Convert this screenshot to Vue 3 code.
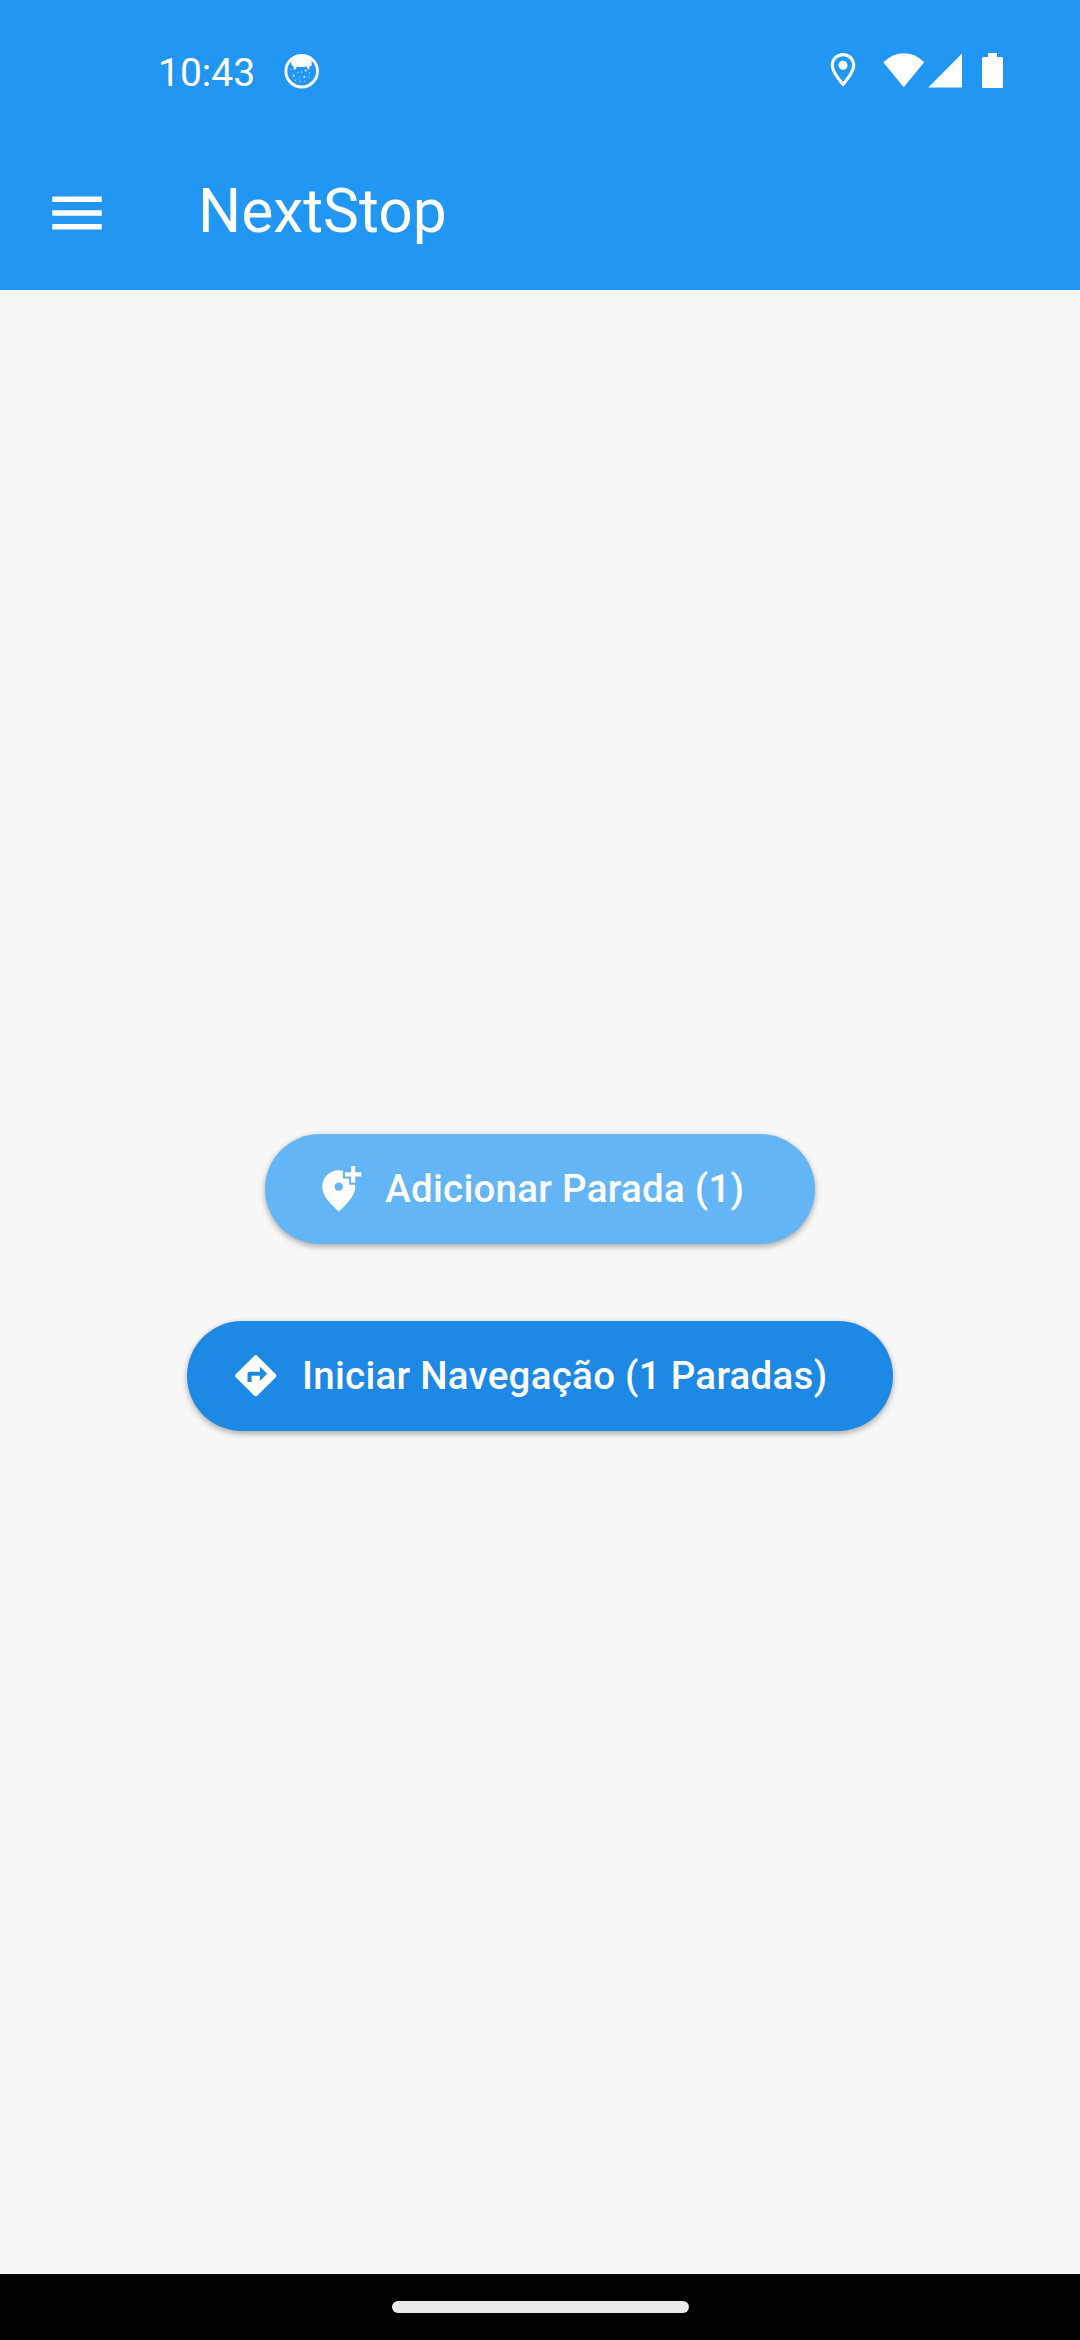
<script setup>
import { ref, computed } from 'vue'

const time = '10:43'
const title = 'NextStop'
const stops = ref(1)
const addLabel = computed(() => `Adicionar Parada (${stops.value})`)
const startLabel = computed(() => `Iniciar Navegação (${stops.value} Paradas)`)
</script>

<template>
  <div class="screen">
    <header class="header">
      <div class="status-bar">
        <span class="clock">{{ time }}</span>
        <svg class="face" viewBox="0 0 36 36" width="36" height="36">
          <circle cx="17.700" cy="18.200" r="15.800" fill="none" stroke="#fff" stroke-width="2.900" />
          <path fill="#fff" d="M8 7Q17.700-1 27.500 7L27.800 12 26.500 13.500 25.300 13 25.500 16 24 16.500 22.800 13.500Q17.700 14.500 12.800 13.500L11.500 16.500 9.700 16.500 9.500 13.500 8 12.500 6.800 10Z" />
          <g fill="#fff" fill-opacity=".75">
            <circle cx="21.700" cy="17.500" r="1.100" />
            <circle cx="9.700" cy="22.700" r="1.100" />
            <circle cx="20.300" cy="23.800" r="1.100" />
            <circle cx="14" cy="19.700" r=".7" />
            <circle cx="17.500" cy="19" r=".7" />
            <circle cx="25.500" cy="20" r=".7" />
            <circle cx="7" cy="16.500" r=".6" />
            <circle cx="25" cy="24" r=".6" />
            <circle cx="15.500" cy="25" r=".6" />
            <circle cx="11.500" cy="27.300" r=".7" />
            <circle cx="16.300" cy="28.500" r=".7" />
            <circle cx="20.500" cy="28" r=".6" />
          </g>
        </svg>
        <svg class="pin" viewBox="0 0 26 36" width="26" height="36">
          <path fill="none" stroke="#fff" stroke-width="3.200" stroke-linejoin="round" d="M13 2.600C6.900 2.600 2.300 7.300 2.300 13.300 2.300 19 7 25.500 13 32.500 19 25.500 23.700 19 23.700 13.300 23.700 7.300 19.100 2.600 13 2.600Z" />
          <circle cx="13" cy="13.300" r="4.500" fill="#fff" />
        </svg>
        <svg class="wifi" viewBox="0 0 42 36" width="42" height="36">
          <path fill="#fff" d="M.3 10.300Q9.500 1.300 21 1.300T41.200 10.300L20.700 35.300Z" />
        </svg>
        <svg class="signal" viewBox="0 0 35 36" width="35" height="36">
          <path fill="#fff" d="M.3 35.400 34 1.500V35.400Z" />
        </svg>
        <svg class="battery" viewBox="0 0 21 36" width="21" height="36">
          <path fill="#fff" d="M6 1h9v4h4.500Q21 5 21 6.500v28Q21 36 19.500 36h-18Q0 36 0 34.500v-28Q0 5 1.500 5H6Z" />
        </svg>
      </div>
      <div class="app-bar">
        <svg class="menu" viewBox="0 0 24 24" width="66" height="66">
          <path fill="#fff" d="M3 18h18v-2H3v2zm0-5h18v-2H3v2zm0-7v2h18V6H3z" />
        </svg>
        <h1 class="title">{{ title }}</h1>
      </div>
    </header>

    <main class="body">
      <button class="btn add">
        <svg class="icon" viewBox="0 0 24 24">
          <path fill="#fff" d="M20 1v3h3v2h-3v3h-2V6h-3V4h3V1h2zM12 13c1.100 0 2-.9 2-2s-.9-2-2-2-2 .9-2 2 .9 2 2 2zM14 3.250V7h3v3h2.920c.05.390.08.790.08 1.200 0 3.320-2.670 7.250-8 11.800-5.330-4.550-8-8.480-8-11.800C4 6.220 7.800 3 12 3c.68 0 1.350.08 2 .25z" />
        </svg>
        <span>{{ addLabel }}</span>
      </button>
      <button class="btn start">
        <svg class="icon" viewBox="0 0 24 24">
          <path fill="#fff" d="M21.710 11.290l-9-9c-.39-.39-1.020-.39-1.410 0l-9 9c-.39.39-.39 1.020 0 1.410l9 9c.39.39 1.020.39 1.410 0l9-9c.39-.38.39-1.010 0-1.410zM14 14.500V12h-4v3H8v-4c0-.55.450-1 1-1h5V7.500l3.500 3.500-3.500 3.500z" />
        </svg>
        <span>{{ startLabel }}</span>
      </button>
    </main>

    <footer class="nav-bar">
      <div class="handle"></div>
    </footer>
  </div>
</template>

<style scoped>
.screen {
  display: flex;
  flex-direction: column;
  width: 1080px;
  height: 2340px;
  background: #f8f8f8;
  font-family: Roboto, sans-serif;
  color: #fff;
  overflow: hidden;
}
.header {
  height: 290px;
  background: #2196f3;
}
.status-bar {
  display: flex;
  align-items: flex-start;
  box-sizing: border-box;
  height: 136px;
  padding: 52px 77px 0 158px;
}
.clock {
  width: 126px;
  margin-top: 1px;
  font-size: 39px;
  line-height: 40px;
}
.face {
  margin-top: 1px;
}
.pin {
  margin-left: auto;
}
.wifi {
  margin-left: 27px;
}
.signal {
  margin-left: 3px;
}
.battery {
  margin-left: 19px;
}
.app-bar {
  display: flex;
  align-items: center;
  height: 154px;
  padding-left: 44px;
}
.title {
  margin: 0 0 2px 88px;
  font-size: 60.5px;
  font-weight: 400;
  line-height: 76px;
}
.body {
  flex: 1;
  display: flex;
  flex-direction: column;
  align-items: center;
  justify-content: center;
  gap: 77px;
  padding-top: 1px;
}
.btn {
  display: flex;
  align-items: center;
  justify-content: center;
  gap: 22px;
  box-sizing: border-box;
  height: 110px;
  padding: 0 66px 1px 44px;
  border: 0;
  border-radius: 55px;
  box-shadow: 0 3px 6px rgba(0, 0, 0, 0.28), 0 0 5px rgba(0, 0, 0, 0.08);
  color: #fff;
  font-family: inherit;
  font-size: 38.5px;
  font-weight: 500;
  letter-spacing: 0.275px;
  line-height: 55px;
  white-space: nowrap;
}
.btn span {
  margin-bottom: 1px;
}
.add {
  min-width: 550px;
  background: #64b5f6;
}
.start {
  background: #1e88e5;
}
.icon {
  width: 49.5px;
  height: 49.5px;
}
.nav-bar {
  display: flex;
  justify-content: center;
  height: 66px;
  background: #000;
}
.handle {
  width: 297px;
  height: 11.5px;
  margin-top: 27.2px;
  border-radius: 6px;
  background: #ebebeb;
}
</style>

<style>
body {
  margin: 0;
}
</style>
